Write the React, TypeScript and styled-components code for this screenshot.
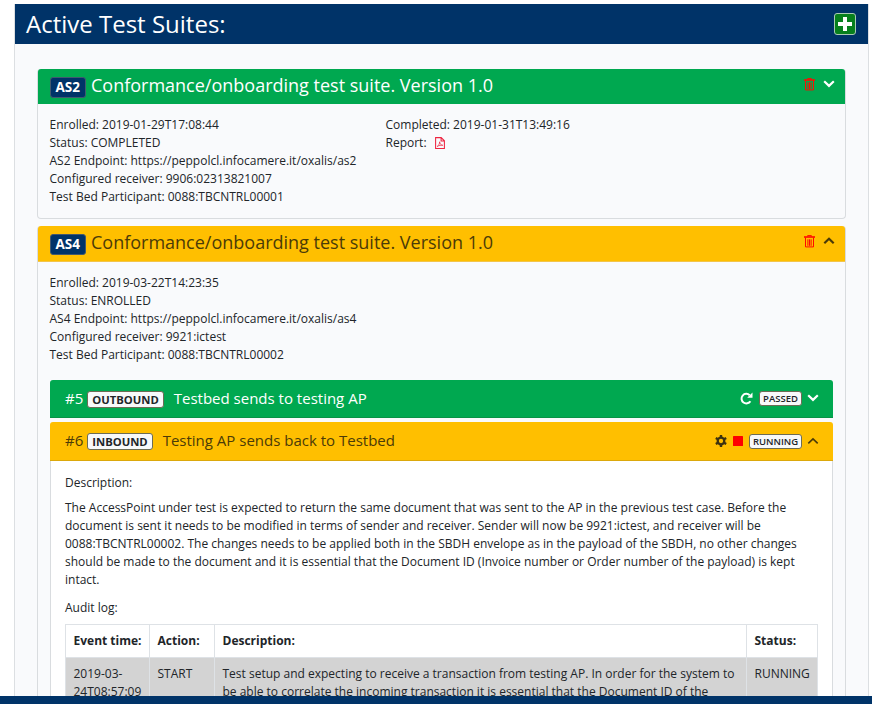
import React from "react";
import styled, { createGlobalStyle } from "styled-components";

const NAVY = "#003368";
const GREEN = "#00a850";
const AMBER = "#ffbf00";
const INK = "#212529";

const GlobalStyle = createGlobalStyle`
  * { box-sizing: border-box; }
  body {
    margin: 0;
    background: #fff;
    color: ${INK};
    font: 12px/18px "Open Sans", sans-serif;
  }
`;

const Page = styled.div`
  display: flex;
  flex-direction: column;
  height: 704px;
  overflow: hidden;
`;

const Content = styled.main`
  flex: 1;
  min-height: 0;
  overflow: hidden;
  padding: 4px 3px 0 14px;
`;

const Footer = styled.footer`
  flex: none;
  height: 8px;
  background: ${NAVY};
`;

const Panel = styled.section`
  min-height: 740px;
  border: 1px solid #dcdfe2;
  border-top: 0;
  background: #f9fafc;
`;

const PanelHeader = styled.header`
  display: flex;
  align-items: center;
  justify-content: space-between;
  height: 40px;
  padding: 0 12px 0 11px;
  background: ${NAVY};
  color: #fff;
`;

const PanelTitle = styled.h1`
  margin: 0;
  font-size: 24px;
  line-height: 40px;
  font-weight: 400;
  white-space: nowrap;
`;

const AddButton = styled.button`
  display: flex;
  align-items: center;
  justify-content: center;
  width: 22px;
  height: 22px;
  padding: 0;
  border: 1px solid #a9c9b4;
  border-radius: 3px;
  background: #07801d;
`;

const SuiteList = styled.div`
  display: flex;
  flex-direction: column;
  gap: 7px;
  padding: 25px 22px 0;
`;

const Suite = styled.article<{ $height: number }>`
  height: ${(p) => p.$height}px;
  border: 1px solid #d9dcdf;
  border-top: 0;
  border-radius: 4px;
`;

const SuiteHeader = styled.header<{ $active?: boolean }>`
  display: flex;
  justify-content: space-between;
  height: ${(p) => (p.$active ? 36 : 35)}px;
  padding: 0 10px 0 11.500px;
  border-bottom: 1px solid ${(p) => (p.$active ? "#f3c54a" : GREEN)};
  border-radius: 3px 3px 0 0;
  background: ${(p) => (p.$active ? AMBER : GREEN)};
  color: ${(p) => (p.$active ? "#4b3b08" : "#fff")};
`;

const SuiteTitle = styled.h2`
  display: flex;
  gap: 5px;
  margin: 0;
  font-size: 18px;
  line-height: 33px;
  font-weight: 400;
  white-space: nowrap;
`;

const Protocol = styled.span`
  height: 21px;
  margin-top: 8px;
  padding: 0 5px;
  border: 1px solid #41586f;
  border-radius: 3px;
  background: ${NAVY};
  color: #fff;
  font-size: 13.500px;
  line-height: 19px;
  font-weight: 700;
`;

const Actions = styled.div<{ $gap: number; $top?: number }>`
  display: flex;
  align-items: center;
  gap: ${(p) => p.$gap}px;
  height: 30px;
  margin-top: ${(p) => p.$top ?? 0}px;
`;

const Icon = styled.svg`
  display: block;
  flex: none;
`;

const Details = styled.div`
  display: grid;
  grid-template-columns: 336px 1fr;
  padding: 12px 11.500px 0;
  white-space: nowrap;
`;

const DetailLine = styled.div`
  display: flex;
  align-items: center;
  gap: 8px;
  height: 18px;
`;

const Cases = styled.div`
  display: flex;
  flex-direction: column;
  gap: 4px;
  padding: 16px 12px 0 12px;
`;

const CaseHeader = styled.header<{ $active?: boolean }>`
  display: flex;
  justify-content: space-between;
  height: ${(p) => (p.$active ? 39 : 38)}px;
  padding: 0 14px 0 15px;
  border-bottom: 1px solid ${(p) => (p.$active ? "#dca80b" : "#079345")};
  border-radius: 3px 3px 0 0;
  background: ${(p) => (p.$active ? AMBER : GREEN)};
  color: ${(p) => (p.$active ? "#4b3b08" : "#fff")};
`;

const CaseTitle = styled.h3`
  display: flex;
  margin: 0;
  font-size: 15px;
  line-height: 37px;
  font-weight: 400;
  white-space: nowrap;
`;

const Direction = styled.span`
  height: 17px;
  margin: 11px 10px 0 4px;
  padding: 0 4px;
  border: 1px solid #6c6c55;
  border-radius: 3px;
  background: #f8f9fa;
  color: ${INK};
  font-size: 11.250px;
  line-height: 16px;
  font-weight: 700;
`;

const State = styled.span<{ $width: number }>`
  width: ${(p) => p.$width}px;
  height: 15px;
  margin-right: -1px;
  border: 1px solid #6c6c55;
  border-radius: 3px;
  background: #f8f9fa;
  color: ${INK};
  font-size: 9.500px;
  line-height: 13px;
  font-weight: 600;
  text-align: center;
`;

const CaseBody = styled.div`
  padding: 13px 15px 0 14px;
  border: 1px solid #d9dcdf;
  border-top: 0;
  background: #fff;
`;

const Text = styled.p<{ $space: number }>`
  margin: 0 0 ${(p) => p.$space}px;
  white-space: nowrap;
`;

const Log = styled.table`
  width: 753px;
  table-layout: fixed;
  border-collapse: collapse;

  th, td {
    padding: 7px 0 7px 7.500px;
    border: 1px solid #dee2e6;
    text-align: left;
    vertical-align: top;
    white-space: nowrap;
  }
  td { background: #d3d3d3; }
`;

const Plus = () => (
  <Icon width="14" height="14" viewBox="0 0 14 14">
    <path d="M5 0h4v5h5v4H9v5H5V9H0V5h5z" fill="#fff" />
  </Icon>
);

const Trash = () => (
  <Icon width="11" height="13" viewBox="0 0 11 13">
    <path d="M3.600 1.500V.600h3.800v.9M1.500 2.500v9.400h8V2.500M3.900 4.300v6.500M5.500 4.300v6.500M7.100 4.300v6.500" fill="none" stroke="#ff0a00" strokeWidth="1" />
    <path d="M0 1.200h11v1.600H0z" fill="#ff0a00" />
  </Icon>
);

const Chevron = ({ up, thin }: { up?: boolean; thin?: boolean }) => (
  <Icon width="12" height="8" viewBox="0 0 12 8">
    <path d={up ? "M1.300 6.300 6 1.800l4.700 4.500" : "M1.200 1.300 6 5.900l4.800-4.600"} fill="none" stroke="currentColor" strokeWidth={thin ? 1.6 : 2.2} />
  </Icon>
);

const Pdf = () => (
  <Icon width="10" height="12" viewBox="0 0 10 12">
    <path d="M.6.600h5.600l3.200 3.200v7.600H.6zM6.100.600v3.300h3.300" fill="none" stroke="#ee2440" strokeWidth="1.050" />
    <path d="M2.200 9.500c1.500-1 2.600-3.200 2.400-4.700.3 2 1.300 3.300 3.200 3.500-2-.3-3.800.1-5.600 1.200" fill="none" stroke="#ee2440" strokeWidth=".75" />
  </Icon>
);

const Redo = () => (
  <Icon width="13" height="13" viewBox="0 0 13 13">
    <path d="M10.400 9.200A4.800 4.800 0 1 1 9.700 3.200" fill="none" stroke="#fff" strokeWidth="2" />
    <path d="M12.500.500v5.300H7.200z" fill="#fff" />
  </Icon>
);

const Gear = () => (
  <Icon width="12" height="12" viewBox="0 0 12 12">
    <circle cx="6" cy="6" r="3.300" fill="none" stroke="#3c3210" strokeWidth="2.300" />
    <path d="M6 0v2.500M6 9.500V12M.8 3l2.100 1.200M9.100 7.800 11.200 9M.8 9l2.100-1.200M9.100 4.200 11.200 3" stroke="#3c3210" strokeWidth="2.400" />
  </Icon>
);

const Stop = () => (
  <Icon width="10" height="10" viewBox="0 0 10 10">
    <rect width="10" height="10" rx=".5" fill="#fe0000" />
  </Icon>
);

export default function App() {
  return (
    <Page>
      <GlobalStyle />
      <Content>
        <Panel>
          <PanelHeader>
            <PanelTitle>Active Test Suites:</PanelTitle>
            <AddButton aria-label="Add test suite"><Plus /></AddButton>
          </PanelHeader>
          <SuiteList>
            <Suite $height={150}>
              <SuiteHeader>
                <SuiteTitle><Protocol>AS2</Protocol>Conformance/onboarding test suite. Version 1.0</SuiteTitle>
                <Actions $gap={8}><Trash /><Chevron /></Actions>
              </SuiteHeader>
              <Details>
                <div>
                  <DetailLine>Enrolled: 2019-01-29T17:08:44</DetailLine>
                  <DetailLine>Status: COMPLETED</DetailLine>
                  <DetailLine>AS2 Endpoint: https://peppolcl.infocamere.it/oxalis/as2</DetailLine>
                  <DetailLine>Configured receiver: 9906:02313821007</DetailLine>
                  <DetailLine>Test Bed Participant: 0088:TBCNTRL00001</DetailLine>
                </div>
                <div>
                  <DetailLine>Completed: 2019-01-31T13:49:16</DetailLine>
                  <DetailLine>Report: <Pdf /></DetailLine>
                </div>
              </Details>
            </Suite>
            <Suite $height={520}>
              <SuiteHeader $active>
                <SuiteTitle><Protocol>AS4</Protocol>Conformance/onboarding test suite. Version 1.0</SuiteTitle>
                <Actions $gap={8}><Trash /><Chevron up /></Actions>
              </SuiteHeader>
              <Details>
                <div>
                  <DetailLine>Enrolled: 2019-03-22T14:23:35</DetailLine>
                  <DetailLine>Status: ENROLLED</DetailLine>
                  <DetailLine>AS4 Endpoint: https://peppolcl.infocamere.it/oxalis/as4</DetailLine>
                  <DetailLine>Configured receiver: 9921:ictest</DetailLine>
                  <DetailLine>Test Bed Participant: 0088:TBCNTRL00002</DetailLine>
                </div>
              </Details>
              <Cases>
                <CaseHeader>
                  <CaseTitle>#5<Direction>OUTBOUND</Direction>Testbed sends to testing AP</CaseTitle>
                  <Actions $gap={6} $top={3}><Redo /><State $width={43}>PASSED</State><Chevron /></Actions>
                </CaseHeader>
                <div>
                  <CaseHeader $active>
                    <CaseTitle>#6<Direction>INBOUND</Direction>Testing AP sends back to Testbed</CaseTitle>
                    <Actions $gap={6} $top={4}><Gear /><Stop /><State $width={53}>RUNNING</State><Chevron up thin /></Actions>
                  </CaseHeader>
                  <CaseBody>
                    <Text $space={7}>Description:</Text>
                    <Text $space={10}>
                      The AccessPoint under test is expected to return the same document that was sent to the AP in the previous test case. Before the<br />
                      document is sent it needs to be modified in terms of sender and receiver. Sender will now be 9921:ictest, and receiver will be<br />
                      0088:TBCNTRL00002. The changes needs to be applied both in the SBDH envelope as in the payload of the SBDH, no other changes<br />
                      should be made to the document and it is essential that the Document ID (Invoice number or Order number of the payload) is kept<br />
                      intact.
                    </Text>
                    <Text $space={7}>Audit log:</Text>
                    <Log>
                      <colgroup>
                        <col style={{ width: 84 }} /><col style={{ width: 65 }} /><col style={{ width: 532 }} /><col />
                      </colgroup>
                      <thead>
                        <tr><th>Event time:</th><th>Action:</th><th>Description:</th><th>Status:</th></tr>
                      </thead>
                      <tbody>
                        <tr>
                          <td>2019-03-<br />24T08:57:09</td>
                          <td>START</td>
                          <td>Test setup and expecting to receive a transaction from testing AP. In order for the system to<br />be able to correlate the incoming transaction it is essential that the Document ID of the</td>
                          <td>RUNNING</td>
                        </tr>
                      </tbody>
                    </Log>
                  </CaseBody>
                </div>
              </Cases>
            </Suite>
          </SuiteList>
        </Panel>
      </Content>
      <Footer />
    </Page>
  );
}
